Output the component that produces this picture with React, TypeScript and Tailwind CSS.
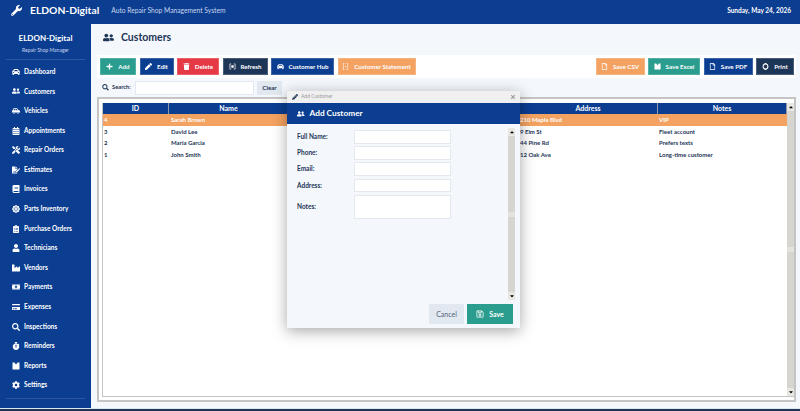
import React from 'react'
import {
  FaWrench, FaCarSide, FaUserFriends, FaCar, FaCalendarAlt, FaTools, FaFileSignature, FaBook, FaCog, FaClipboardList,
  FaUser, FaIndustry, FaMoneyBillAlt, FaCreditCard, FaSearch, FaStopwatch, FaPlus, FaPen, FaTrash,
  FaRegFile, FaRegSave, FaPencilAlt, FaTimes, FaCaretUp, FaCaretDown, FaDharmachakra,
} from 'react-icons/fa'

function NotchIcon({ className }: { className?: string }) {
  return (
    <svg viewBox="0 0 16 16" width="1em" height="1em" fill="currentColor" className={className}>
      <path d="M1 1h4l3 4 3-4h4v14H1z" />
    </svg>
  )
}

function BracketIcon({ className }: { className?: string }) {
  return (
    <svg viewBox="0 0 16 16" width="1em" height="1em" fill="none" stroke="currentColor" strokeWidth="1.6" className={className}>
      <path d="M5 2H2v12h3M11 2h3v12h-3" />
      <path d="M6 6h4v4H6z" fill="currentColor" />
    </svg>
  )
}

function StatementIcon({ className }: { className?: string }) {
  return (
    <svg viewBox="0 0 16 16" width="1em" height="1em" fill="none" stroke="currentColor" strokeWidth="1.4" className={className}>
      <path d="M6 1H3v14h3M10 1h3v14h-3M6 8h4" />
    </svg>
  )
}

function RingIcon({ className }: { className?: string }) {
  return (
    <svg viewBox="0 0 16 16" width="1em" height="1em" fill="none" stroke="currentColor" strokeWidth="2.4" className={className}>
      <circle cx="8" cy="8" r="5.5" />
      <path d="M6 1h4M6 15h4" />
    </svg>
  )
}

const navItems = [
  { label: 'Dashboard', icon: FaCar },
  { label: 'Customers', icon: FaUserFriends },
  { label: 'Vehicles', icon: FaCarSide },
  { label: 'Appointments', icon: FaCalendarAlt },
  { label: 'Repair Orders', icon: FaTools },
  { label: 'Estimates', icon: FaFileSignature },
  { label: 'Invoices', icon: FaBook },
  { label: 'Parts Inventory', icon: FaDharmachakra },
  { label: 'Purchase Orders', icon: FaClipboardList },
  { label: 'Technicians', icon: FaUser },
  { label: 'Vendors', icon: FaIndustry },
  { label: 'Payments', icon: FaMoneyBillAlt },
  { label: 'Expenses', icon: FaCreditCard },
  { label: 'Inspections', icon: FaSearch },
  { label: 'Reminders', icon: FaStopwatch },
  { label: 'Reports', icon: NotchIcon },
  { label: 'Settings', icon: FaCog },
]

const rows = [
  { id: '4', name: 'Sarah Brown', address: '210 Maple Blvd', notes: 'VIP' },
  { id: '3', name: 'David Lee', address: '9 Elm St', notes: 'Fleet account' },
  { id: '2', name: 'Maria Garcia', address: '44 Pine Rd', notes: 'Prefers texts' },
  { id: '1', name: 'John Smith', address: '12 Oak Ave', notes: 'Long-time customer' },
]

function ToolButton({ icon: Icon, label, color, width }: { icon: React.ElementType; label: string; color: string; width: string }) {
  return (
    <button className={`flex h-[17px] items-center justify-center gap-[5px] whitespace-nowrap border border-white/20 text-[6.2px] font-bold text-white ${color} ${width}`}>
      <Icon className="text-[7px]" />
      {label}
    </button>
  )
}

function ScrollBar() {
  return (
    <div className="flex h-full w-[7px] flex-col justify-between bg-[#d6d5cf]">
      <div className="flex h-[8px] items-center justify-center bg-[#e8e7e2]"><FaCaretUp className="text-[6px] text-black" /></div>
      <div className="h-[5px] bg-[#e3e2dd]"></div>
      <div className="flex h-[8px] items-center justify-center bg-[#e8e7e2]"><FaCaretDown className="text-[6px] text-black" /></div>
    </div>
  )
}

function Field({ label, tall }: { label: string; tall?: boolean }) {
  return (
    <div className="flex items-center">
      <span className="w-[57px] text-[6.5px] font-bold text-[#1d3557]">{label}</span>
      <div className={`w-[97px] border border-[#e4e9f0] bg-white ${tall ? 'h-[24px]' : 'h-[13.7px]'}`}></div>
    </div>
  )
}

export default function App() {
  return (
    <div className="relative flex h-[411px] w-[800px] flex-col overflow-hidden bg-[#f4f7fc] font-['Lato',sans-serif]">
      <header className="flex h-[24px] shrink-0 items-center bg-[#0b3d91] pb-[3px] pl-[11px] pr-[9px] text-white">
        <FaWrench className="text-[11px]" />
        <span className="ml-[8px] text-[10.3px] font-bold">ELDON-Digital</span>
        <span className="ml-[12px] text-[6.7px] text-[#c9d6ee]">Auto Repair Shop Management System</span>
        <span className="ml-auto text-[6.5px] font-bold">Sunday, May 24, 2026</span>
      </header>

      <div className="flex min-h-0 flex-1">
        <aside className="w-[91px] shrink-0 bg-[#0b3d91] text-white">
          <div className="mx-[6px] border-b border-[#2a559f] pb-[5px] pt-[9px] text-center">
            <div className="text-[8px] font-bold leading-[11px]">ELDON-Digital</div>
            <div className="mt-[3px] text-[5px] leading-[7px] text-[#c9d6ee]">Repair Shop Manager</div>
          </div>
          <nav className="mt-[2px] flex flex-col">
            {navItems.map((item) => (
              <div key={item.label} className="flex h-[19.6px] items-center pl-[12px] text-[6.5px] font-bold">
                <span className="w-[12px]"><item.icon className="text-[8px]" /></span>
                {item.label}
              </div>
            ))}
          </nav>
          <div className="mx-[6px] mt-[3px] border-b border-[#2a559f]"></div>
        </aside>

        <main className="ml-[1px] flex min-w-0 flex-1 flex-col">
          <div className="flex h-[31px] shrink-0 items-center pb-[4px] pl-[11px] text-[#1d3557]">
            <FaUserFriends className="text-[11px]" />
            <span className="ml-[7px] text-[10.5px] font-bold">Customers</span>
          </div>

          <div className="ml-[5px] mr-[4px] flex h-[23px] shrink-0 items-center justify-between bg-white pl-[3px] pr-[2px]">
            <div className="flex gap-[3.5px]">
              <ToolButton icon={FaPlus} label="Add" color="bg-[#2a9d8f]" width="w-[36px]" />
              <ToolButton icon={FaPen} label="Edit" color="bg-[#0b3d91]" width="w-[34px]" />
              <ToolButton icon={FaTrash} label="Delete" color="bg-[#e63946]" width="w-[42px]" />
              <ToolButton icon={BracketIcon} label="Refresh" color="bg-[#1d3557]" width="w-[45px]" />
              <ToolButton icon={FaCar} label="Customer Hub" color="bg-[#0b3d91]" width="w-[63px]" />
              <ToolButton icon={StatementIcon} label="Customer Statement" color="bg-[#f4a261]" width="w-[78px]" />
            </div>
            <div className="flex gap-[3.5px]">
              <ToolButton icon={FaRegFile} label="Save CSV" color="bg-[#f4a261]" width="w-[49px]" />
              <ToolButton icon={NotchIcon} label="Save Excel" color="bg-[#2a9d8f]" width="w-[52px]" />
              <ToolButton icon={FaRegFile} label="Save PDF" color="bg-[#0b3d91]" width="w-[49px]" />
              <ToolButton icon={RingIcon} label="Print" color="bg-[#1d3557]" width="w-[38px]" />
            </div>
          </div>

          <div className="flex h-[19px] shrink-0 items-center pl-[10px]">
            <FaSearch className="w-[7px] text-[6.5px] text-[#1d3557]" />
            <span className="ml-[3px] w-[22px] text-[5.8px] font-bold text-[#1d3557]">Search:</span>
            <div className="ml-[1px] h-[14px] w-[119px] border border-[#e4e9f0] bg-white"></div>
            <div className="ml-[3px] flex h-[14px] w-[25px] items-center justify-center bg-[#e2e8f0] text-[6.2px] font-bold text-[#1d3557]">Clear</div>
          </div>

          <div className="ml-[5px] mr-[4px] h-[305px] shrink-0 border-2 border-[#c4c4c4] bg-white pb-[3px] pl-[3px] pt-[4px]">
            <div className="flex h-full border-b border-l border-[#c4c4c4]">
              <div className="min-w-0 flex-1">
                <div className="grid h-[11px] grid-cols-[66px_120px_230px_139px_1fr] bg-[#0b3d91] text-center text-[7px] font-bold leading-[11px] text-white">
                  {['ID', 'Name', '', 'Address', 'Notes'].map((h) => (
                    <div key={h} className="border-r border-[#8f99a8]">{h}</div>
                  ))}
                </div>
                {rows.map((r, i) => (
                  <div
                    key={r.id}
                    className={`grid h-[11.7px] grid-cols-[66px_120px_230px_139px_1fr] text-[6px] font-bold leading-[11.7px] ${i === 0 ? 'bg-[#f4a261] text-white' : 'text-[#1d3557]'}`}
                  >
                    <div className="pl-[1px]">{r.id}</div>
                    <div className="pl-[2px]">{r.name}</div>
                    <div></div>
                    <div className="pl-[1px]">{r.address}</div>
                    <div className="pl-[1px]">{r.notes}</div>
                  </div>
                ))}
              </div>
              <ScrollBar />
            </div>
          </div>
        </main>
      </div>

      <footer className="h-[3px] shrink-0 border-t border-[#dfe6f0] bg-[#1d3557]"></footer>

      {/* Add Customer dialog */}
      <div className="absolute left-[287px] top-[91px] flex h-[237px] w-[233px] flex-col bg-[#f4f7fc] shadow-[0_3px_14px_rgba(0,0,0,0.35)]">
        <div className="flex h-[12px] shrink-0 items-center bg-[#f0f0f0] pl-[5px] pr-[4px] text-[#9a9a9a]">
          <FaPencilAlt className="text-[6px] text-[#1d3557]" />
          <span className="ml-[3px] text-[5px]">Add Customer</span>
          <FaTimes className="ml-auto text-[6px]" />
        </div>
        <div className="flex h-[21px] shrink-0 items-center bg-[#0b3d91] pl-[10px] text-white">
          <FaUserFriends className="text-[7.5px]" />
          <span className="ml-[5px] text-[8.3px] font-bold">Add Customer</span>
        </div>
        <div className="flex min-h-0 flex-1 pr-[5px] pt-[4px]">
          <div className="flex flex-1 flex-col gap-[2.5px] pl-[10px] pt-[2px]">
            <Field label="Full Name:" />
            <Field label="Phone:" />
            <Field label="Email:" />
            <Field label="Address:" />
            <Field label="Notes:" tall />
          </div>
          <div className="h-[172px]"><ScrollBar /></div>
        </div>
        <div className="absolute bottom-[4px] right-[7px] flex gap-[3px]">
          <div className="flex h-[20px] w-[35px] items-center justify-center bg-[#e2e8f0] text-[7px] text-[#55657f]">Cancel</div>
          <div className="flex h-[20px] w-[46px] items-center justify-center gap-[5px] bg-[#2a9d8f] text-[7px] font-bold text-white">
            <FaRegSave className="text-[8px]" />
            Save
          </div>
        </div>
      </div>
    </div>
  )
}
